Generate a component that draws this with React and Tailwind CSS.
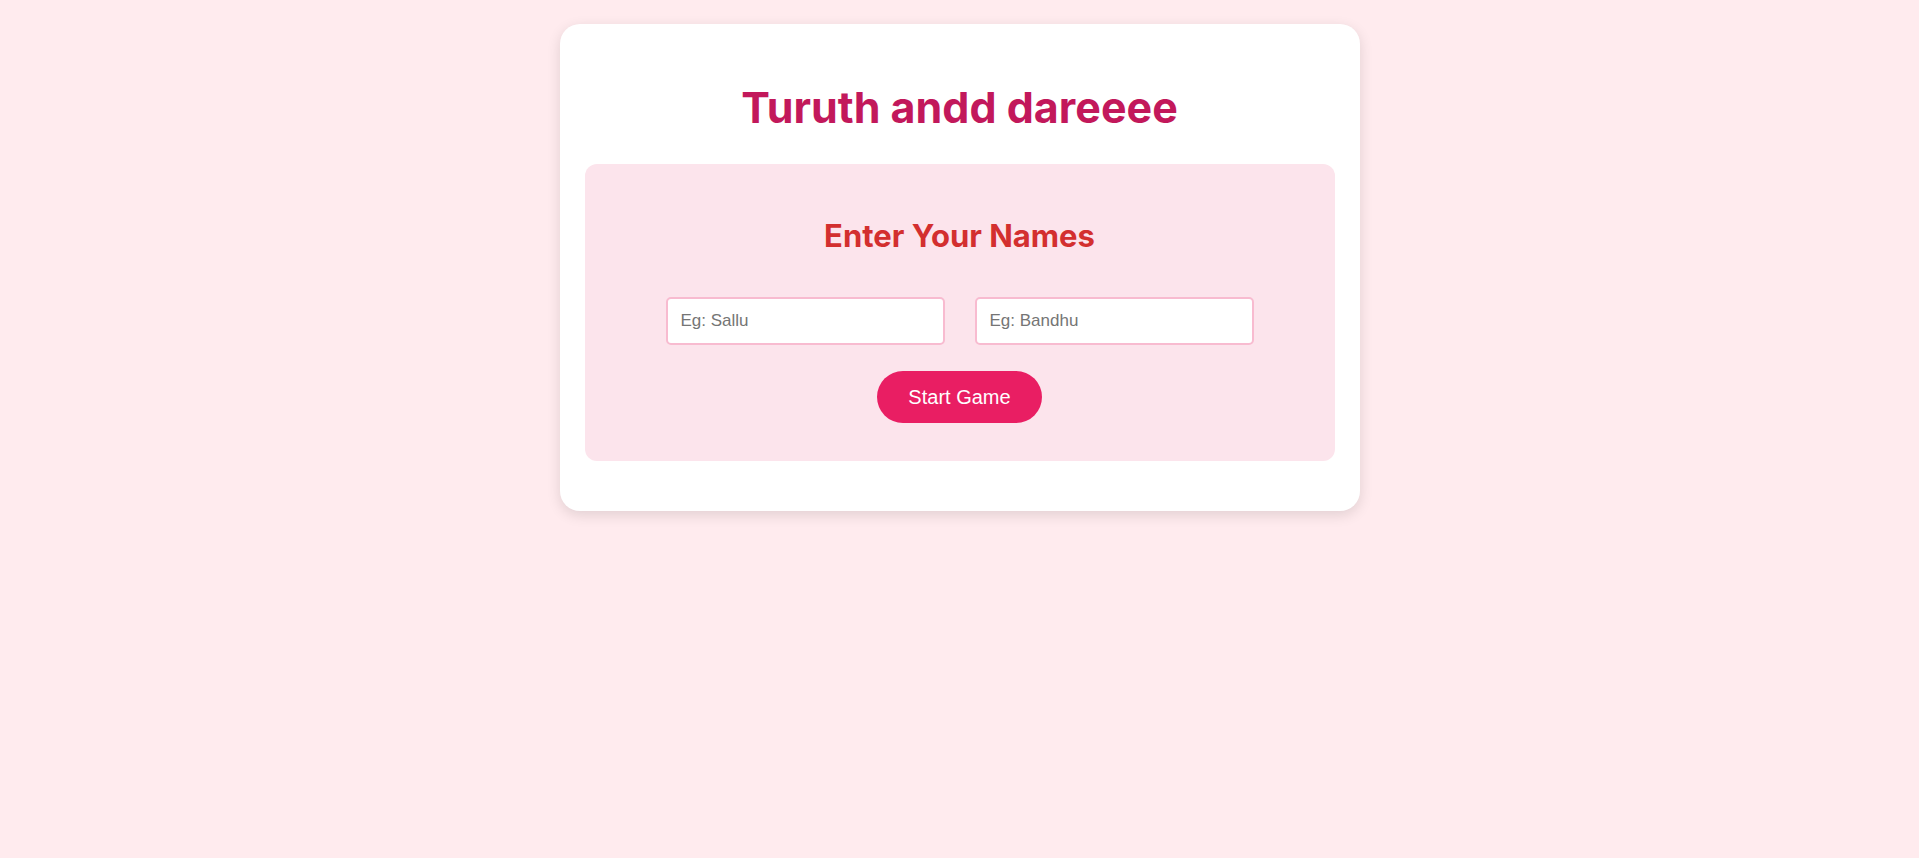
export default function App() {
  return (
    <div className="min-h-screen bg-[#ffebee] pt-[24px] font-['Liberation_Sans',Arial,sans-serif]">
      <div className="mx-auto w-[800px] rounded-[20px] bg-white px-[25px] pt-[25px] pb-[50px] shadow-[0_4px_14px_rgba(0,0,0,0.12)]">
        <h1 className="pt-[34px] pb-[33px] text-center font-['Inter',sans-serif] text-[43px] font-bold leading-[48px] text-[#c2185b]">
          Turuth andd dareeee
        </h1>

        {/* Names panel */}
        <div className="flex flex-col items-center rounded-[12px] bg-[#fce4ec] pt-[54px] pb-[38px]">
          <h2 className="font-['Inter',sans-serif] text-[31px] font-bold leading-[35px] text-[#d32f2f]">
            Enter Your Names
          </h2>
          <div className="mt-[44px] flex gap-[30px]">
            <input
              placeholder="Eg: Sallu"
              className="h-[48px] w-[279px] rounded-[5px] border-2 border-[#f8bbd0] bg-white px-[13px] text-[17px] text-gray-800 placeholder:text-[#757575] focus:outline-none"
            />
            <input
              placeholder="Eg: Bandhu"
              className="h-[48px] w-[279px] rounded-[5px] border-2 border-[#f8bbd0] bg-white px-[13px] text-[17px] text-gray-800 placeholder:text-[#757575] focus:outline-none"
            />
          </div>
          <button className="mt-[26px] h-[52px] w-[165px] rounded-full bg-[#e91e63] text-[20px] text-white">
            Start Game
          </button>
        </div>
      </div>
    </div>
  );
}
